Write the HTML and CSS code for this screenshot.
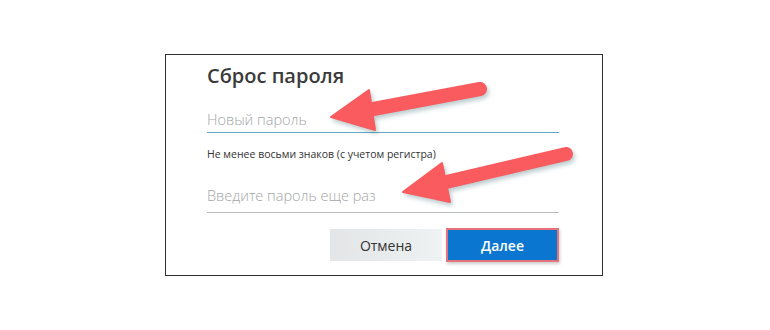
FILE: index.html
```
<!DOCTYPE html>
<html lang="ru">
<head>
    <meta charset="UTF-8">
    <meta name="viewport" content="width=device-width, initial-scale=1.0">
    <title>Сброс пароля</title>
    <link rel="stylesheet" href="styles.css">
</head>
<body>
    <div class="card">
        <h1>Сброс пароля</h1>

        <div class="field focused">
            <input type="password" placeholder="Новый пароль">
        </div>
        <p class="hint">Не менее восьми знаков (с учетом регистра)</p>

        <div class="field">
            <input type="password" placeholder="Введите пароль еще раз">
        </div>

        <div class="actions">
            <button class="btn btn-cancel">Отмена</button>
            <button class="btn btn-next">Далее</button>
        </div>
    </div>

    <!-- стрелки поверх формы -->
    <svg class="arrows" width="770" height="330" viewBox="0 0 770 330">
        <g class="arrow">
            <line x1="480" y1="89" x2="368" y2="110"/>
            <polygon points="331,117 369,90 375,130"/>
        </g>
        <g class="arrow">
            <line x1="566" y1="154" x2="442" y2="183"/>
            <polygon points="403,192 442,163 450,202"/>
        </g>
    </svg>
</body>
</html>
```

FILE: styles.css
```
body {
    margin: 0;
    background: #fff;
    font-family: "Open Sans", "Noto Sans", sans-serif;
    position: relative;
    width: 770px;
    height: 330px;
    overflow: hidden;
}
.card {
    margin: 54px 0 0 165px;
    width: 438px;
    height: 222px;
    box-sizing: border-box;
    border: 1.5px solid #2e2e2e;
    padding: 6px 43px 0 41px;
    background: #fff;
}
h1 {
    margin: 0;
    font-size: 20px;
    font-weight: 600;
    color: #3b3b3b;
    line-height: 30px;
}
.field {
    margin-top: 17px;
    border-bottom: 1px solid #b8bcbe;
}
.field.focused {
    margin-top: 15px;
    border-bottom-color: #62a9bf;
}
.field input {
    width: 100%;
    border: none;
    outline: none;
    padding: 0;
    height: 26px;
    font-family: inherit;
    font-size: 14.5px;
    font-weight: 300;
    background: transparent;
}
.field:not(.focused) input {
    height: 33px;
}
.field input::placeholder {
    color: #a3a6a8;
}
.hint {
    margin: 13px 0 0;
    font-size: 10.5px;
    color: #333;
    line-height: 16px;
}
.actions {
    display: flex;
    justify-content: flex-end;
    gap: 4px;
    margin-top: 15px;
}
.btn {
    height: 34px;
    font-family: inherit;
    font-size: 14px;
    border: none;
    padding: 0;
}
.btn-cancel {
    width: 112px;
    margin-top: 1px;
    height: 32px;
    background: linear-gradient(90deg, #e3e5e6, #eef2f2);
    color: #333;
}
.btn-next {
    width: 113px;
    background: #0a76d0;
    color: #fff;
    font-weight: 600;
    border: 2.5px solid #e8727a;
    box-shadow: 1px 2px 3px rgba(0,0,0,0.2);
}
.arrows {
    position: absolute;
    left: 0;
    top: 0;
    pointer-events: none;
}
.arrow {
    filter: drop-shadow(2px 3px 2px rgba(40,90,100,0.3));
}
.arrow line {
    stroke: #f95b5f;
    stroke-width: 14;
    stroke-linecap: round;
}
.arrow polygon {
    fill: #f95b5f;
    stroke: #f95b5f;
    stroke-width: 2;
    stroke-linejoin: round;
}
```
